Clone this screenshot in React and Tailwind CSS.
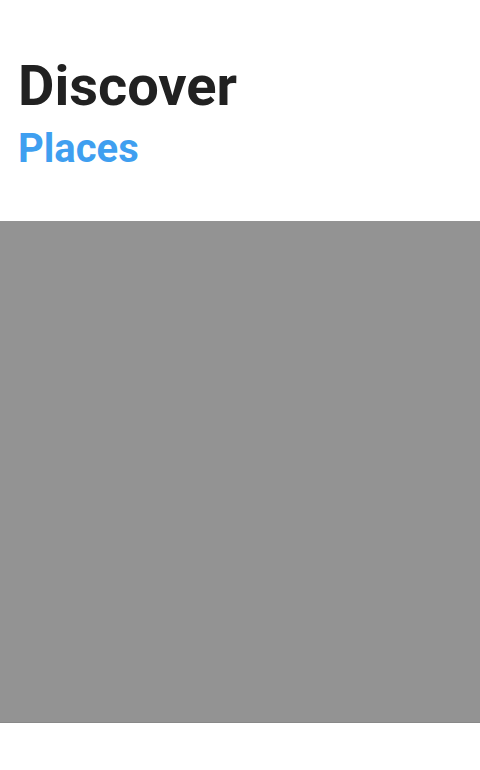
export default function App() {
  return (
    <div className="min-h-[770px] bg-white font-['Roboto',sans-serif]">
      <div className="px-[18px] pt-[54px] pb-[49px]">
        <h1 className="text-[56px] leading-[64px] font-bold text-[#212121]">Discover</h1>
        <h2 className="text-[40px] leading-[46px] font-bold text-[#3f9ff0] mt-[8px]">Places</h2>
      </div>
      <div className="h-[502px] bg-[#939393] border-b border-[#888888]" />
    </div>
  )
}
